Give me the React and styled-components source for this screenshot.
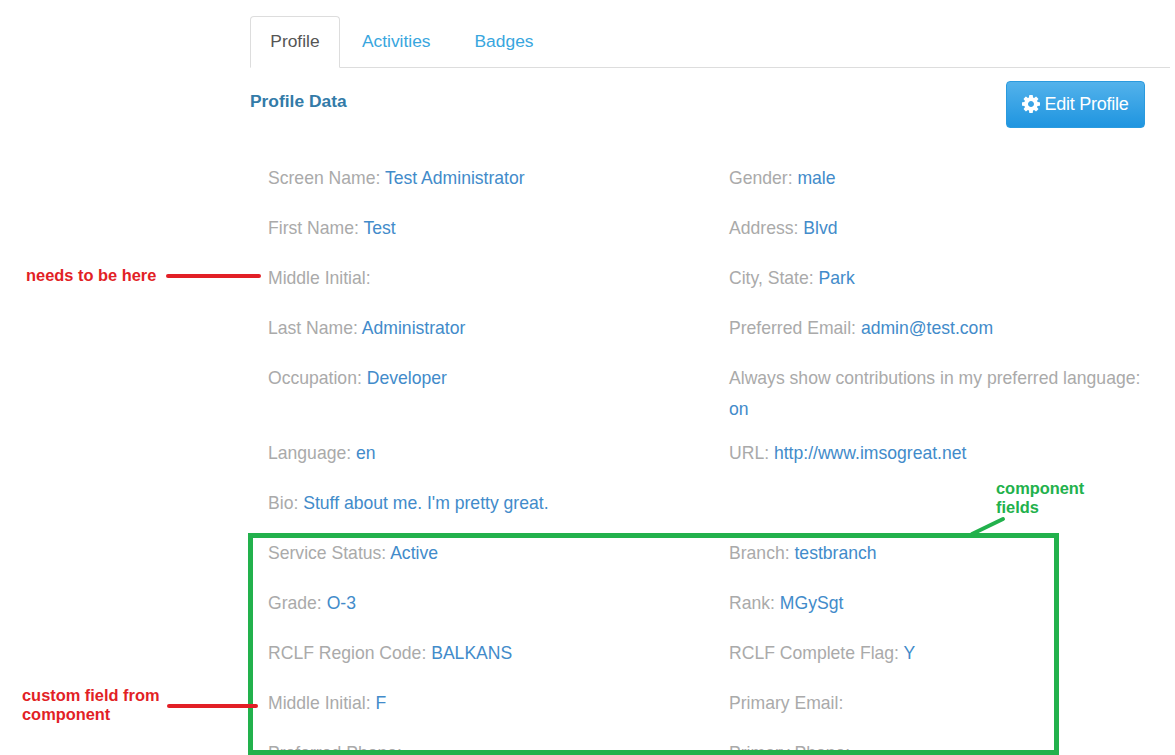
import React from 'react';
import styled, { createGlobalStyle } from 'styled-components';

const Global = createGlobalStyle`
  html, body { margin: 0; padding: 0; height: 755px; overflow: hidden; background: #fff; }
  body { font-family: "Liberation Sans", Arial, sans-serif; font-size: 17.58px; color: #555; }
`;
const Page = styled.div`
  position: relative;
  height: 755px;
  overflow: hidden;
  padding: 16px 5px 0 250px;
  box-sizing: border-box;
`;
const Tabs = styled.nav`
  display: flex;
  height: 51px;
  border-bottom: 1px solid #ddd;
`;
const Tab = styled.a`
  display: flex;
  align-items: center;
  height: 52px;
  padding: 0 ${p => (p.$active ? '19.3px' : '21px')} 2px;
  box-sizing: border-box;
  font-size: 17.4px;
  color: ${p => (p.$active ? '#555' : '#38a6de')};
  background: ${p => (p.$active ? '#fff' : 'transparent')};
  border: 1px solid ${p => (p.$active ? '#ddd' : 'transparent')};
  border-bottom-color: ${p => (p.$active ? '#fff' : 'transparent')};
  border-radius: 4px 4px 0 0;
`;
const Header = styled.div`
  display: flex;
  justify-content: space-between;
  align-items: flex-start;
  padding: 13px 25px 0 0;
  height: 47px;
`;
const Title = styled.h3`
  margin: 10px 0 0;
  font-size: 17.4px;
  line-height: 20px;
  font-weight: 700;
  color: #337ba8;
`;
const EditButton = styled.button`
  display: flex;
  align-items: center;
  justify-content: center;
  gap: 4px;
  width: 139px;
  height: 47px;
  padding: 0;
  font: 18px "Liberation Sans", Arial, sans-serif;
  letter-spacing: -0.25px;
  color: #fff;
  background: linear-gradient(to bottom, #53b2eb, #1f95e0);
  border: 1px solid #2a9ade;
  border-radius: 4px;
`;
const GearIcon = styled.svg`
  width: 18px;
  height: 18px;
  margin-bottom: 2px;
  fill: currentColor;
`;
const FieldGrid = styled.div`
  display: grid;
  grid-template-columns: 461px 461px;
  padding: 35px 0 0 18px;
`;
const Field = styled.div`
  line-height: 31px;
  padding-bottom: ${p => (p.$tight ? '13px' : '19px')};
  padding-right: 30px;
  color: #aaa;
`;
const Value = styled.span`
  color: #428bca;
`;
const Frame = styled.div`
  position: absolute;
  left: 248px;
  top: 533px;
  width: 811px;
  height: 222px;
  box-sizing: border-box;
  border: 5px solid #22b14c;
`;
const Marks = styled.svg`
  position: absolute;
  left: 0;
  top: 0;
  width: 1175px;
  height: 755px;
  pointer-events: none;
`;
const Note = styled.div`
  position: absolute;
  left: ${p => p.$x}px;
  top: ${p => p.$y}px;
  font-size: 16.4px;
  line-height: 19px;
  font-weight: 700;
  color: ${p => p.$color};
`;

const rows = [
  [['Screen Name:', 'Test Administrator'], ['Gender:', 'male']],
  [['First Name:', 'Test'], ['Address:', 'Blvd']],
  [['Middle Initial:', ''], ['City, State:', 'Park']],
  [['Last Name:', 'Administrator'], ['Preferred Email:', 'admin@test.com']],
  [['Occupation:', 'Developer'], ['Always show contributions in my preferred language:', 'on']],
  [['Language:', 'en'], ['URL:', 'http://www.imsogreat.net']],
  [['Bio:', "Stuff about me. I'm pretty great."], null],
  [['Service Status:', 'Active'], ['Branch:', 'testbranch']],
  [['Grade:', 'O-3'], ['Rank:', 'MGySgt']],
  [['RCLF Region Code:', 'BALKANS'], ['RCLF Complete Flag:', 'Y']],
  [['Middle Initial:', 'F'], ['Primary Email:', '']],
  [['Preferred Phone:', ''], ['Primary Phone:', '']],
];

export default function App() {
  return (
    <Page>
      <Global />
      <Tabs>
        <Tab $active>Profile</Tab>
        <Tab>Activities</Tab>
        <Tab>Badges</Tab>
      </Tabs>
      <Header>
        <Title>Profile Data</Title>
        <EditButton>
          <GearIcon viewBox="128 128 1536 1536">
            <path d="M1152 896q0-106-75-181t-181-75-181 75-75 181 75 181 181 75 181-75 75-181zm512-109v222q0 12-8 23t-20 13l-185 28q-19 54-39 91 35 50 107 138 10 12 10 25t-9 23q-27 37-99 108t-94 71q-12 0-26-9l-138-108q-44 23-91 38-16 136-29 186-7 28-36 28h-222q-14 0-24.5-8.5t-11.5-21.5l-28-184q-49-16-90-37l-141 107q-10 9-25 9-14 0-25-11-126-114-165-168-7-10-7-23 0-12 8-23 15-21 51-66.5t54-70.5q-27-50-41-99l-183-27q-13-2-21-12.5t-8-23.5v-222q0-12 8-23t19-13l186-28q14-46 39-92-40-57-107-138-10-12-10-24 0-10 9-23 26-36 98.5-107.5t94.5-71.5q13 0 26 10l138 107q44-23 91-38 16-136 29-186 7-28 36-28h222q14 0 24.5 8.5t11.5 21.5l28 184q49 16 90 37l142-107q9-9 24-9 13 0 25 10 129 119 165 170 7 8 7 22 0 12-8 23-15 21-51 66.5t-54 70.5q26 50 41 98l183 28q13 2 21 12.5t8 23.5z" />
          </GearIcon>
          Edit Profile
        </EditButton>
      </Header>
      <FieldGrid>
        {rows.flatMap((row, i) =>
          row.map((f, j) => {
            const tight = i === 4;
            return f ? (
              <Field key={`${i}-${j}`} $tight={tight}>
                {f[0]} <Value>{f[1]}</Value>
              </Field>
            ) : (
              <Field key={`${i}-${j}`} />
            );
          })
        )}
      </FieldGrid>
      <Frame />
      <Marks viewBox="0 0 1175 755">
        <line x1="168" y1="276" x2="259" y2="276" stroke="#e21f26" strokeWidth="4" strokeLinecap="round" />
        <line x1="169" y1="706" x2="256" y2="706" stroke="#e21f26" strokeWidth="4" strokeLinecap="round" />
        <line x1="972" y1="534" x2="1003" y2="519" stroke="#22b14c" strokeWidth="4" strokeLinecap="round" />
      </Marks>
      <Note $x={26} $y={266} $color="#e21f26">needs to be here</Note>
      <Note $x={22} $y={686} $color="#e21f26">custom field from<br />component</Note>
      <Note $x={996} $y={479} $color="#22b14c">component<br />fields</Note>
    </Page>
  );
}
